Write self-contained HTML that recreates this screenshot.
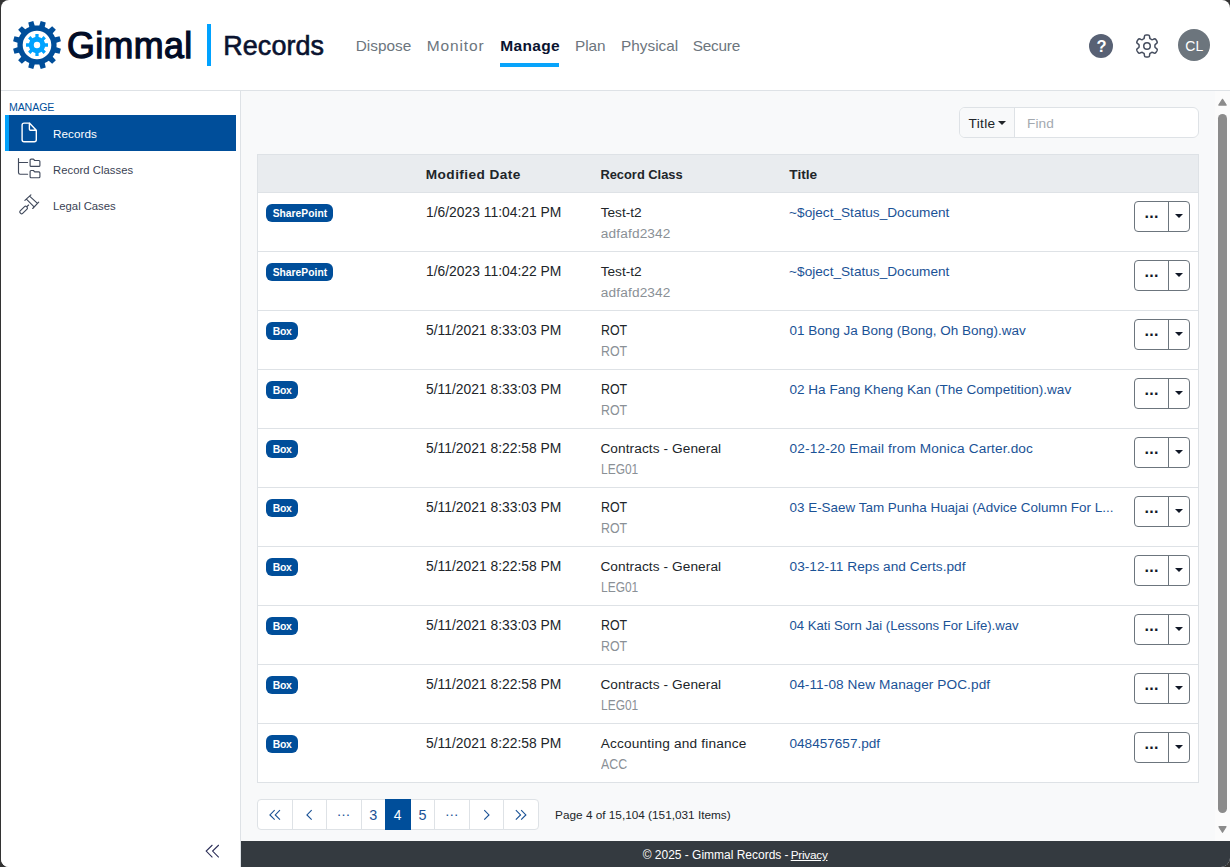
<!DOCTYPE html>
<html lang="en"><head><meta charset="utf-8"><title>Gimmal Records</title>
<style>
html,body{margin:0;padding:0;width:1230px;height:867px;overflow:hidden;background:#333;}
body{font-family:'Liberation Sans', sans-serif;font-size:13.2px;}
#app{position:absolute;left:1px;top:0;width:1229px;height:867px;background:#fff;border-radius:8px 8px 9px 8px;overflow:hidden;}
.abs{position:absolute}
.t{position:absolute;white-space:pre;line-height:20px;transform-origin:0 50%;z-index:4}
#hdrline{position:absolute;left:0;top:90px;width:1229px;height:1px;background:#dee2e6}
#side{position:absolute;left:0;top:91px;width:239px;height:776px;background:#fff;border-right:1px solid #dee2e6}
#main{position:absolute;left:240px;top:91px;width:974px;height:750px;background:#f8f9fa}
#sb{position:absolute;left:1214px;top:91px;width:15px;height:750px;background:#fbfbfb}
#foot{position:absolute;left:240px;top:841px;width:989px;height:26px;background:#343a40}
#tbl{position:absolute;left:256px;top:154px;width:940px;height:627px;border:1px solid #dee2e6;background:#fff}
#thead{position:absolute;left:257px;top:155px;width:940px;height:37px;background:#e9ecef;border-bottom:1px solid #dee2e6}
.rowline{position:absolute;left:257px;width:940px;height:1px;background:#dee2e6}
.badge{position:absolute;height:18px;border-radius:6px;background:#004e9a}
.bg{position:absolute;left:1133px;width:54px;height:29px;border:1px solid #6c757d;border-radius:4px;background:#fff}
.bg .sep{position:absolute;left:33px;top:0;width:1px;height:29px;background:#6c757d}
.bg .car{position:absolute;left:40px;top:12px;width:0;height:0;border-left:4px solid transparent;border-right:4px solid transparent;border-top:4.5px solid #111827}
.bg .dots{position:absolute;left:9.5px;top:1px;font-size:16px;line-height:20px;font-weight:700;color:#111827;letter-spacing:0.3px;white-space:pre}
.pc{position:absolute;top:799px;height:29px;border:1px solid #dee2e6;background:#fff;box-sizing:content-box;margin-left:0}
.pc.act{background:#004e9a;border-color:#004e9a;z-index:2}
.pc.first{border-radius:4px 0 0 4px}.pc.last{border-radius:0 4px 4px 0}
</style></head><body>
<div id="app">
<!-- header -->
<svg class="abs" style="left:0;top:0" width="80" height="90" viewBox="0 0 80 90">
<path fill="#004e9a" fill-rule="evenodd" d="M38.32 25.54L39.70 21.08L44.75 22.44L43.72 26.98A19.6 19.6 0 0 1 47.74 29.31L51.16 26.14L54.86 29.84L51.69 33.26A19.6 19.6 0 0 1 54.02 37.28L58.56 36.25L59.92 41.30L55.46 42.68A19.6 19.6 0 0 1 55.46 47.32L59.92 48.70L58.56 53.75L54.02 52.72A19.6 19.6 0 0 1 51.69 56.74L54.86 60.16L51.16 63.86L47.74 60.69A19.6 19.6 0 0 1 43.72 63.02L44.75 67.56L39.70 68.92L38.32 64.46A19.6 19.6 0 0 1 33.68 64.46L32.30 68.92L27.25 67.56L28.28 63.02A19.6 19.6 0 0 1 24.26 60.69L20.84 63.86L17.14 60.16L20.31 56.74A19.6 19.6 0 0 1 17.98 52.72L13.44 53.75L12.08 48.70L16.54 47.32A19.6 19.6 0 0 1 16.54 42.68L12.08 41.30L13.44 36.25L17.98 37.28A19.6 19.6 0 0 1 20.31 33.26L17.14 29.84L20.84 26.14L24.26 29.31A19.6 19.6 0 0 1 28.28 26.98L27.25 22.44L32.30 21.08L33.68 25.54A19.6 19.6 0 0 1 38.32 25.54ZM21.70 45a14.3 14.3 0 1 0 28.6 0a14.3 14.3 0 1 0 -28.6 0Z"/>
<path fill="#00a3ff" fill-rule="evenodd" d="M34.37 36.96L34.36 34.02L37.64 34.02L37.63 36.96A8.2 8.2 0 0 1 40.53 38.16L42.60 36.08L44.92 38.40L42.84 40.47A8.2 8.2 0 0 1 44.04 43.37L46.98 43.36L46.98 46.64L44.04 46.63A8.2 8.2 0 0 1 42.84 49.53L44.92 51.60L42.60 53.92L40.53 51.84A8.2 8.2 0 0 1 37.63 53.04L37.64 55.98L34.36 55.98L34.37 53.04A8.2 8.2 0 0 1 31.47 51.84L29.40 53.92L27.08 51.60L29.16 49.53A8.2 8.2 0 0 1 27.96 46.63L25.02 46.64L25.02 43.36L27.96 43.37A8.2 8.2 0 0 1 29.16 40.47L27.08 38.40L29.40 36.08L31.47 38.16A8.2 8.2 0 0 1 34.37 36.96ZM32.80 45a3.2 3.2 0 1 0 6.4 0a3.2 3.2 0 1 0 -6.4 0Z"/>
</svg>
<span class="t" style="left:66.3px;top:23.6px;font-size:36.2px;line-height:44px;font-weight:400;color:#020c26;-webkit-text-stroke:1.25px #020c26;letter-spacing:0.4px;transform:scaleX(0.988)">Gimmal</span>
<div class="abs" style="left:206px;top:24px;width:4px;height:42px;background:#00a2ff"></div>
<span class="t" style="left:222.2px;top:31px;font-size:26.94px;line-height:30px;color:#0a1330;letter-spacing:0.100px;-webkit-text-stroke:0.6px #0a1330;">Records</span>
<span class="t" style="left:354.7px;top:37px;font-size:15.35px;line-height:17px;color:#6c757d;letter-spacing:0.033px;">Dispose</span>
<span class="t" style="left:425.7px;top:37px;font-size:15.5px;line-height:17px;color:#6c757d;letter-spacing:0.867px;">Monitor</span>
<span class="t" style="left:499.2px;top:37px;font-size:15.5px;line-height:17px;font-weight:700;color:#0a1330;letter-spacing:0.360px;">Manage</span>
<span class="t" style="left:574.0px;top:37px;font-size:15.35px;line-height:17px;color:#6c757d;letter-spacing:-0.100px;">Plan</span>
<span class="t" style="left:620.1px;top:37px;font-size:15.35px;line-height:17px;color:#6c757d;">Physical</span>
<span class="t" style="left:691.8px;top:37px;font-size:15.35px;line-height:17px;color:#6c757d;letter-spacing:-0.240px;">Secure</span>
<div class="abs" style="left:499px;top:63px;width:59px;height:4px;background:#08a4fb"></div>
<!-- right icons -->
<div class="abs" style="left:1088px;top:34px;width:24px;height:24px;border-radius:50%;background:#586174"></div>
<span class="t" style="left:1095.6px;top:35.5px;font-size:16.5px;font-weight:700;color:#fff;">?</span>
<svg class="abs" style="left:1133px;top:33px" width="26" height="26" viewBox="-13 -13 26 26"><g fill="none" stroke="#454d5e" stroke-width="1.5" stroke-linejoin="round">
<path d="M0.00 -11.00L0.48 -10.99L0.96 -10.95L1.43 -10.87L1.89 -10.72L2.30 -10.38L2.57 -9.58L2.68 -8.50L2.83 -7.77L3.07 -7.42L3.36 -7.21L3.66 -7.03L3.96 -6.86L4.26 -6.69L4.56 -6.52L4.89 -6.37L5.32 -6.34L6.02 -6.57L7.02 -7.02L7.84 -7.18L8.34 -7.00L8.70 -6.68L9.00 -6.30L9.28 -5.91L9.53 -5.50L9.76 -5.08L9.96 -4.64L10.13 -4.20L10.23 -3.72L10.14 -3.20L9.58 -2.57L8.70 -1.93L8.14 -1.44L7.96 -1.05L7.92 -0.69L7.92 -0.35L7.92 -0.00L7.92 0.35L7.92 0.69L7.96 1.05L8.14 1.44L8.70 1.93L9.58 2.57L10.14 3.20L10.23 3.72L10.13 4.20L9.96 4.64L9.76 5.08L9.53 5.50L9.28 5.91L9.00 6.30L8.70 6.68L8.34 7.00L7.84 7.18L7.02 7.02L6.02 6.57L5.32 6.34L4.89 6.37L4.56 6.52L4.26 6.69L3.96 6.86L3.66 7.03L3.36 7.21L3.07 7.42L2.83 7.77L2.68 8.50L2.57 9.58L2.30 10.38L1.89 10.72L1.43 10.87L0.96 10.95L0.48 10.99L0.00 11.00L-0.48 10.99L-0.96 10.95L-1.43 10.87L-1.89 10.72L-2.30 10.38L-2.57 9.58L-2.68 8.50L-2.83 7.77L-3.07 7.42L-3.36 7.21L-3.66 7.03L-3.96 6.86L-4.26 6.69L-4.56 6.52L-4.89 6.37L-5.32 6.34L-6.02 6.57L-7.02 7.02L-7.84 7.18L-8.34 7.00L-8.70 6.68L-9.00 6.30L-9.28 5.91L-9.53 5.50L-9.76 5.08L-9.96 4.64L-10.13 4.20L-10.23 3.72L-10.14 3.20L-9.58 2.57L-8.70 1.93L-8.14 1.44L-7.96 1.05L-7.92 0.69L-7.92 0.35L-7.92 0.00L-7.92 -0.35L-7.92 -0.69L-7.96 -1.05L-8.14 -1.44L-8.70 -1.93L-9.58 -2.57L-10.14 -3.20L-10.23 -3.72L-10.13 -4.20L-9.96 -4.64L-9.76 -5.08L-9.53 -5.50L-9.28 -5.91L-9.00 -6.30L-8.70 -6.68L-8.34 -7.00L-7.84 -7.18L-7.02 -7.02L-6.02 -6.57L-5.32 -6.34L-4.89 -6.37L-4.56 -6.52L-4.26 -6.69L-3.96 -6.86L-3.66 -7.03L-3.36 -7.21L-3.07 -7.42L-2.83 -7.77L-2.68 -8.50L-2.57 -9.58L-2.30 -10.38L-1.89 -10.72L-1.43 -10.87L-0.96 -10.95L-0.48 -10.99Z"/><circle cx="0" cy="0" r="3.25"/></g></svg>
<div class="abs" style="left:1177px;top:29px;width:32px;height:32px;border-radius:50%;background:#6c757d"></div>
<span class="t" style="left:1184.2px;top:38px;font-size:13.97px;line-height:16px;color:#ffffff;letter-spacing:0.100px;">CL</span>
<div id="hdrline"></div>
<!-- sidebar -->
<div id="side"></div>
<span class="t" style="left:7.9px;top:101px;font-size:10.62px;line-height:12px;color:#004e9a;letter-spacing:-0.100px;">MANAGE</span>
<div class="abs" style="left:4px;top:115px;width:231px;height:36px;background:#004e9a"></div>
<div class="abs" style="left:4px;top:115px;width:4px;height:36px;background:#00a1fb"></div>
<svg class="abs" style="left:19px;top:121px" width="19" height="23" viewBox="20 121 19 23"><g fill="none" stroke="#fff" stroke-width="1.4" stroke-linejoin="round"><path d="M29.4 123.1H24.1a2 2 0 0 0-2 2V139.8a2 2 0 0 0 2 2H34.3a2 2 0 0 0 2-2V130.2L29.4 123.1V129.2a1 1 0 0 0 1 1H36.3"/></g></svg>
<svg class="abs" style="left:16px;top:157px" width="25" height="23" viewBox="17 157 25 23"><g fill="none" stroke="#414a5c" stroke-width="1.15" stroke-linecap="round" stroke-linejoin="round">
<path d="M18.5 158.5V172.6a1.6 1.6 0 0 0 1.6 1.6H27.6M18.5 162.5H27.6"/>
<path d="M30.1 160.1a1 1 0 0 1 1-1h2.3l1.3 1.4h4.2a1 1 0 0 1 1 1v3.9a1 1 0 0 1-1 1h-7.8a1 1 0 0 1-1-1z"/>
<path d="M30.1 171.5a1 1 0 0 1 1-1h2.3l1.3 1.4h4.2a1 1 0 0 1 1 1v3.9a1 1 0 0 1-1 1h-7.8a1 1 0 0 1-1-1z"/>
</g></svg>
<svg class="abs" style="left:16px;top:192px" width="25" height="25" viewBox="17 192 25 25"><g fill="none" stroke="#414a5c" stroke-width="1.15" stroke-linecap="round" stroke-linejoin="round">
<path d="M30.9 194.9L24.9 200.4M38.7 202.2L32.7 208.5M30.1 196.6L37.2 203.2M26.9 199.6L33.6 206.4"/>
<path d="M28.6 205L26.9 206.7"/>
<rect x="-4.5" y="-1.75" width="9" height="3.5" rx="1.4" transform="translate(23.6 210) rotate(-45)"/>
</g></svg>
<svg class="abs" style="left:203px;top:843px" width="17" height="16" viewBox="204 843 17 16"><g fill="none" stroke="#2c2f58" stroke-width="1.1"><path d="M212.4 845L206.2 851.1L212.4 857.3M218.8 845L212.6 851.1L218.8 857.3"/></g></svg>

<span class="t" style="left:52.1px;top:127px;font-size:11.68px;line-height:13px;color:#ffffff;letter-spacing:0.050px;">Records</span>
<span class="t" style="left:52.1px;top:164px;font-size:11.26px;line-height:12px;color:#3a4254;letter-spacing:0.046px;">Record Classes</span>
<span class="t" style="left:52.1px;top:200px;font-size:11.34px;line-height:12px;color:#3a4254;letter-spacing:-0.040px;">Legal Cases</span>
<!-- main -->
<div id="main"></div>
<div id="sb"></div>
<div class="abs" style="left:1217px;top:113.5px;width:9px;height:699.5px;border-radius:4.5px;background:#8b8b8b"></div>
<svg class="abs" style="left:1214px;top:91px" width="15" height="750" viewBox="0 0 15 750"><path fill="#8b8b8b" stroke="#8b8b8b" stroke-width="1.2" stroke-linejoin="round" d="M3.8 14.1L7.5 8.3L11.2 14.1Z M4 735.7L11 735.7L7.5 741.3Z"/></svg>
<!-- toolbar -->
<div class="abs" style="left:958px;top:107px;width:238px;height:29px;border:1px solid #dee2e6;border-radius:6px;background:#fff;overflow:hidden"><div class="abs" style="left:0;top:0;width:54px;height:29px;background:#f8f9fa;border-right:1px solid #dee2e6"></div></div>
<span class="t" style="left:967.6px;top:116px;font-size:13.66px;line-height:15px;color:#212529;letter-spacing:0.300px;">Title</span>
<span class="t" style="left:1026.1px;top:116px;font-size:13.66px;line-height:15px;color:#a3a9b0;letter-spacing:0.067px;">Find</span>
<div class="abs" style="left:997px;top:120.5px;width:0;height:0;border-left:4px solid transparent;border-right:4px solid transparent;border-top:4px solid #212529"></div>
<!-- table -->
<div id="tbl"></div>
<div id="thead"></div>
<span class="t" style="left:424.8px;top:167px;font-size:13.66px;line-height:15px;font-weight:700;color:#212529;letter-spacing:0.425px;">Modified Date</span>
<span class="t" style="left:599.4px;top:167px;font-size:12.88px;line-height:15px;font-weight:700;color:#212529;">Record Class</span>
<span class="t" style="left:788.3px;top:167px;font-size:13.66px;line-height:15px;font-weight:700;color:#212529;">Title</span>
<div class="badge" style="left:265px;top:204px;width:67px"></div>
<div class="rowline" style="top:251px"></div>
<div class="bg" style="top:201px"><span class="dots">...</span><i class="sep"></i><i class="car"></i></div>
<span class="t" style="left:271.7px;top:208px;font-size:10.26px;line-height:11px;font-weight:700;color:#ffffff;letter-spacing:0.033px;">SharePoint</span>
<span class="t" style="left:425.3px;top:204px;font-size:14.0px;line-height:16px;color:#212529;transform:scaleX(0.9896);">1/6/2023 11:04:21 PM</span>
<span class="t" style="left:599.8px;top:205px;font-size:13.66px;line-height:15px;color:#212529;letter-spacing:-0.050px;">Test-t2</span>
<span class="t" style="left:599.8px;top:226px;font-size:13.66px;line-height:15px;color:#8a9096;letter-spacing:0.144px;">adfafd2342</span>
<a class="t" style="left:788.1px;top:205px;font-size:13.64px;line-height:15px;color:#1a5296;letter-spacing:0.005px;">~$oject_Status_Document</a>
<div class="badge" style="left:265px;top:263px;width:67px"></div>
<div class="rowline" style="top:310px"></div>
<div class="bg" style="top:260px"><span class="dots">...</span><i class="sep"></i><i class="car"></i></div>
<span class="t" style="left:271.7px;top:267px;font-size:10.26px;line-height:11px;font-weight:700;color:#ffffff;letter-spacing:0.033px;">SharePoint</span>
<span class="t" style="left:425.3px;top:263px;font-size:14.0px;line-height:16px;color:#212529;transform:scaleX(0.9896);">1/6/2023 11:04:22 PM</span>
<span class="t" style="left:599.8px;top:264px;font-size:13.66px;line-height:15px;color:#212529;letter-spacing:-0.050px;">Test-t2</span>
<span class="t" style="left:599.8px;top:285px;font-size:13.66px;line-height:15px;color:#8a9096;letter-spacing:0.144px;">adfafd2342</span>
<a class="t" style="left:788.1px;top:264px;font-size:13.64px;line-height:15px;color:#1a5296;letter-spacing:0.005px;">~$oject_Status_Document</a>
<div class="badge" style="left:265px;top:322px;width:32px"></div>
<div class="rowline" style="top:369px"></div>
<div class="bg" style="top:319px"><span class="dots">...</span><i class="sep"></i><i class="car"></i></div>
<span class="t" style="left:271.7px;top:326px;font-size:10.43px;line-height:11px;font-weight:700;color:#ffffff;letter-spacing:-0.300px;">Box</span>
<span class="t" style="left:425.3px;top:322px;font-size:14.0px;line-height:16px;color:#212529;transform:scaleX(0.9896);">5/11/2021 8:33:03 PM</span>
<span class="t" style="left:599.5px;top:322px;font-size:14.0px;line-height:16px;color:#212529;transform:scaleX(0.8857);">ROT</span>
<span class="t" style="left:599.5px;top:343px;font-size:14.0px;line-height:16px;color:#8a9096;transform:scaleX(0.8857);">ROT</span>
<a class="t" style="left:788.5px;top:323px;font-size:13.49px;line-height:15px;color:#1a5296;letter-spacing:0.003px;">01 Bong Ja Bong (Bong, Oh Bong).wav</a>
<div class="badge" style="left:265px;top:381px;width:32px"></div>
<div class="rowline" style="top:428px"></div>
<div class="bg" style="top:378px"><span class="dots">...</span><i class="sep"></i><i class="car"></i></div>
<span class="t" style="left:271.7px;top:385px;font-size:10.43px;line-height:11px;font-weight:700;color:#ffffff;letter-spacing:-0.300px;">Box</span>
<span class="t" style="left:425.3px;top:381px;font-size:14.0px;line-height:16px;color:#212529;transform:scaleX(0.9896);">5/11/2021 8:33:03 PM</span>
<span class="t" style="left:599.5px;top:381px;font-size:14.0px;line-height:16px;color:#212529;transform:scaleX(0.8857);">ROT</span>
<span class="t" style="left:599.5px;top:402px;font-size:14.0px;line-height:16px;color:#8a9096;transform:scaleX(0.8857);">ROT</span>
<a class="t" style="left:788.5px;top:382px;font-size:13.57px;line-height:15px;color:#1a5296;letter-spacing:-0.007px;">02 Ha Fang Kheng Kan (The Competition).wav</a>
<div class="badge" style="left:265px;top:440px;width:32px"></div>
<div class="rowline" style="top:487px"></div>
<div class="bg" style="top:437px"><span class="dots">...</span><i class="sep"></i><i class="car"></i></div>
<span class="t" style="left:271.7px;top:444px;font-size:10.43px;line-height:11px;font-weight:700;color:#ffffff;letter-spacing:-0.300px;">Box</span>
<span class="t" style="left:425.3px;top:440px;font-size:14.0px;line-height:16px;color:#212529;transform:scaleX(0.9896);">5/11/2021 8:22:58 PM</span>
<span class="t" style="left:599.4px;top:441px;font-size:13.66px;line-height:15px;color:#212529;letter-spacing:0.089px;">Contracts - General</span>
<span class="t" style="left:599.5px;top:461px;font-size:14.0px;line-height:16px;color:#8a9096;transform:scaleX(0.8548);">LEG01</span>
<a class="t" style="left:788.5px;top:441px;font-size:13.66px;line-height:15px;color:#1a5296;letter-spacing:0.142px;">02-12-20 Email from Monica Carter.doc</a>
<div class="badge" style="left:265px;top:499px;width:32px"></div>
<div class="rowline" style="top:546px"></div>
<div class="bg" style="top:496px"><span class="dots">...</span><i class="sep"></i><i class="car"></i></div>
<span class="t" style="left:271.7px;top:503px;font-size:10.43px;line-height:11px;font-weight:700;color:#ffffff;letter-spacing:-0.300px;">Box</span>
<span class="t" style="left:425.3px;top:499px;font-size:14.0px;line-height:16px;color:#212529;transform:scaleX(0.9896);">5/11/2021 8:33:03 PM</span>
<span class="t" style="left:599.5px;top:499px;font-size:14.0px;line-height:16px;color:#212529;transform:scaleX(0.8857);">ROT</span>
<span class="t" style="left:599.5px;top:520px;font-size:14.0px;line-height:16px;color:#8a9096;transform:scaleX(0.8857);">ROT</span>
<a class="t" style="left:788.5px;top:500px;font-size:13.45px;line-height:15px;color:#1a5296;">03 E-Saew Tam Punha Huajai (Advice Column For L...</a>
<div class="badge" style="left:265px;top:558px;width:32px"></div>
<div class="rowline" style="top:605px"></div>
<div class="bg" style="top:555px"><span class="dots">...</span><i class="sep"></i><i class="car"></i></div>
<span class="t" style="left:271.7px;top:562px;font-size:10.43px;line-height:11px;font-weight:700;color:#ffffff;letter-spacing:-0.300px;">Box</span>
<span class="t" style="left:425.3px;top:558px;font-size:14.0px;line-height:16px;color:#212529;transform:scaleX(0.9896);">5/11/2021 8:22:58 PM</span>
<span class="t" style="left:599.4px;top:559px;font-size:13.66px;line-height:15px;color:#212529;letter-spacing:0.089px;">Contracts - General</span>
<span class="t" style="left:599.5px;top:579px;font-size:14.0px;line-height:16px;color:#8a9096;transform:scaleX(0.8548);">LEG01</span>
<a class="t" style="left:788.5px;top:559px;font-size:13.66px;line-height:15px;color:#1a5296;letter-spacing:0.035px;">03-12-11 Reps and Certs.pdf</a>
<div class="badge" style="left:265px;top:617px;width:32px"></div>
<div class="rowline" style="top:664px"></div>
<div class="bg" style="top:614px"><span class="dots">...</span><i class="sep"></i><i class="car"></i></div>
<span class="t" style="left:271.7px;top:621px;font-size:10.43px;line-height:11px;font-weight:700;color:#ffffff;letter-spacing:-0.300px;">Box</span>
<span class="t" style="left:425.3px;top:617px;font-size:14.0px;line-height:16px;color:#212529;transform:scaleX(0.9896);">5/11/2021 8:33:03 PM</span>
<span class="t" style="left:599.5px;top:617px;font-size:14.0px;line-height:16px;color:#212529;transform:scaleX(0.8857);">ROT</span>
<span class="t" style="left:599.5px;top:638px;font-size:14.0px;line-height:16px;color:#8a9096;transform:scaleX(0.8857);">ROT</span>
<a class="t" style="left:788.5px;top:618px;font-size:13.17px;line-height:15px;color:#1a5296;letter-spacing:-0.013px;">04 Kati Sorn Jai (Lessons For Life).wav</a>
<div class="badge" style="left:265px;top:676px;width:32px"></div>
<div class="rowline" style="top:723px"></div>
<div class="bg" style="top:673px"><span class="dots">...</span><i class="sep"></i><i class="car"></i></div>
<span class="t" style="left:271.7px;top:680px;font-size:10.43px;line-height:11px;font-weight:700;color:#ffffff;letter-spacing:-0.300px;">Box</span>
<span class="t" style="left:425.3px;top:676px;font-size:14.0px;line-height:16px;color:#212529;transform:scaleX(0.9896);">5/11/2021 8:22:58 PM</span>
<span class="t" style="left:599.4px;top:677px;font-size:13.66px;line-height:15px;color:#212529;letter-spacing:0.089px;">Contracts - General</span>
<span class="t" style="left:599.5px;top:697px;font-size:14.0px;line-height:16px;color:#8a9096;transform:scaleX(0.8548);">LEG01</span>
<a class="t" style="left:788.5px;top:677px;font-size:13.66px;line-height:15px;color:#1a5296;letter-spacing:0.074px;">04-11-08 New Manager POC.pdf</a>
<div class="badge" style="left:265px;top:735px;width:32px"></div>
<div class="rowline" style="top:782px"></div>
<div class="bg" style="top:732px"><span class="dots">...</span><i class="sep"></i><i class="car"></i></div>
<span class="t" style="left:271.7px;top:739px;font-size:10.43px;line-height:11px;font-weight:700;color:#ffffff;letter-spacing:-0.300px;">Box</span>
<span class="t" style="left:425.3px;top:735px;font-size:14.0px;line-height:16px;color:#212529;transform:scaleX(0.9896);">5/11/2021 8:22:58 PM</span>
<span class="t" style="left:599.8px;top:736px;font-size:13.66px;line-height:15px;color:#212529;letter-spacing:0.171px;">Accounting and finance</span>
<span class="t" style="left:600.4px;top:756px;font-size:14.0px;line-height:16px;color:#8a9096;transform:scaleX(0.8828);">ACC</span>
<a class="t" style="left:788.5px;top:736px;font-size:13.62px;line-height:15px;color:#1a5296;letter-spacing:-0.017px;">048457657.pdf</a>

<!-- pagination -->
<div class="pc first" style="left:256px;width:34px"></div><div class="pc" style="left:291px;width:33px"></div><div class="pc" style="left:325px;width:34px"></div><div class="pc" style="left:360px;width:23px"></div><div class="pc act" style="left:384px;width:24px"></div><div class="pc" style="left:409px;width:23px"></div><div class="pc" style="left:433px;width:34px"></div><div class="pc" style="left:468px;width:33px"></div><div class="pc last" style="left:502px;width:34px"></div>
<svg class="abs" style="left:256px;top:799px;z-index:3" width="283" height="31" viewBox="257 799 283 31"><g fill="none" stroke="#1a5296" stroke-width="1.15"><path d="M274.65 810.20L269.95 814.90L274.65 819.60M279.95 810.20L275.25 814.90L279.95 819.60M311.65 810.20L306.95 814.90L311.65 819.60M484.25 810.20L488.95 814.90L484.25 819.60M515.85 810.20L520.55 814.90L515.85 819.60M521.15 810.20L525.85 814.90L521.15 819.60"/></g></svg>
<span class="t" style="left:335.6px;top:801px;font-size:14px;line-height:20px;font-weight:400;color:#1a5296">…</span>
<span class="t" style="left:443.7px;top:801px;font-size:14px;line-height:20px;font-weight:400;color:#1a5296">…</span>

<span class="t" style="left:368.3px;top:807px;font-size:14.36px;line-height:16px;color:#1a5296;letter-spacing:-0.800px;">3</span>
<span class="t" style="left:392.7px;top:807px;font-size:13.9px;line-height:16px;color:#ffffff;">4</span>
<span class="t" style="left:417.5px;top:807px;font-size:14.36px;line-height:16px;color:#1a5296;letter-spacing:-0.800px;">5</span>
<span class="t" style="left:554.1px;top:808px;font-size:11.79px;line-height:13px;color:#212529;">Page 4 of 15,104 (151,031 Items)</span>
<!-- footer -->
<div id="foot"></div>
<span class="t" style="left:641.7px;top:848px;font-size:12.01px;line-height:14px;color:#ffffff;letter-spacing:-0.012px;">© 2025 - Gimmal Records - </span>
<a class="t" style="left:789.7px;top:848px;font-size:11.77px;line-height:13px;color:#ffffff;letter-spacing:-0.250px;text-decoration:underline;text-underline-offset:1px;">Privacy</a>
</div>
</body></html>
